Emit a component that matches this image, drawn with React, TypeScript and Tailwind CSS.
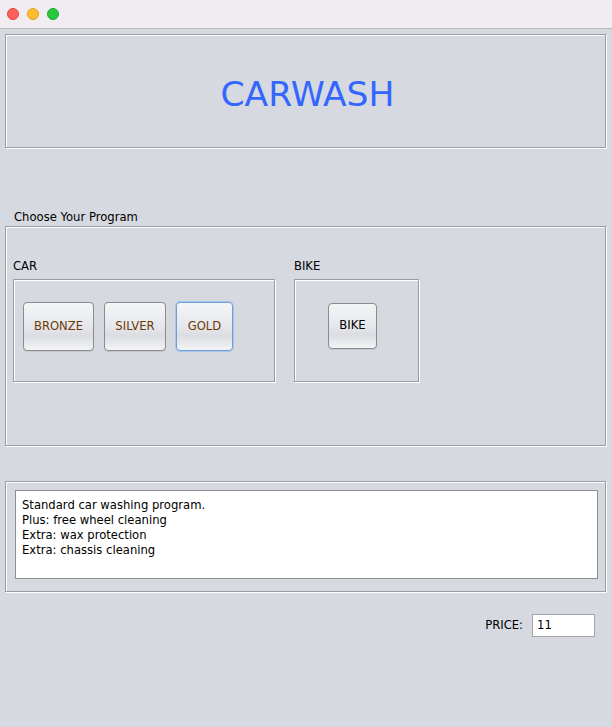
const etched = 'border border-[#9d9d9f] shadow-[inset_1px_1px_0_#ffffff,1px_1px_0_#ffffff]';

const carPrograms = [
  { name: 'BRONZE', w: 'w-[71px]' },
  { name: 'SILVER', w: 'w-[62px]' },
  { name: 'GOLD', w: 'w-[57px]', focused: true },
];

const description = [
  'Standard car washing program.',
  'Plus: free wheel cleaning',
  'Extra: wax protection',
  'Extra: chassis cleaning',
];

const AquaButton = ({
  label,
  className,
  focused,
  dark,
}: {
  label: string;
  className: string;
  focused?: boolean;
  dark?: boolean;
}) => (
  <button
    className={`${className} rounded-[4px] border text-[11.6px] bg-[linear-gradient(#f4f5f7,#e6e7eb_50%,#dcdde2_70%,#f3f4f6)] ${
      focused
        ? 'border-[#6f9fd6] shadow-[0_0_0_1px_#a9c6ea]'
        : 'border-[#8b8b8e] shadow-[0_1px_0_#c6c7cc]'
    } ${dark ? 'text-black' : 'text-[#6b3a06]'}`}
  >
    {label}
  </button>
);

export default function App() {
  return (
    <div className="w-[612px] h-[727px] bg-[#d6d9e0] overflow-hidden font-['DejaVu_Sans',sans-serif] text-[11.6px] text-black">
      {/* title bar */}
      <div className="h-[29px] bg-[#f1ecf1] border-b border-[#b9b9bc] flex items-center gap-[8px] pl-[7px]">
        <span className="w-[12px] h-[12px] rounded-full bg-[#fe5f57] border border-[#e1463f]" />
        <span className="w-[12px] h-[12px] rounded-full bg-[#febc2e] border border-[#dea123]" />
        <span className="w-[12px] h-[12px] rounded-full bg-[#28c840] border border-[#1aab29]" />
      </div>

      {/* header */}
      <div className={`${etched} ml-[5px] mt-[5px] w-[601px] h-[114px] flex items-center justify-center pt-[6px] pl-[4px]`}>
        <span className="text-[#3366ff] text-[34.5px] leading-none">CARWASH</span>
      </div>

      {/* program chooser */}
      <p className="ml-[14px] mt-[61px] h-[16px] leading-[16px]">Choose Your Program</p>
      <div className={`${etched} ml-[5px] mt-[1px] w-[601px] h-[220px] pt-[32px] pl-[7px] flex gap-[19px]`}>
        <div>
          <p className="h-[15px] leading-[15px]">CAR</p>
          <div className={`${etched} mt-[5px] w-[262px] h-[103px] pl-[9px] pt-[22px] flex gap-[10px]`}>
            {carPrograms.map((p) => (
              <AquaButton key={p.name} label={p.name} className={`${p.w} h-[49px]`} focused={p.focused} />
            ))}
          </div>
        </div>
        <div>
          <p className="h-[15px] leading-[15px]">BIKE</p>
          <div className={`${etched} mt-[5px] w-[125px] h-[103px] pt-[23px] pl-[33px]`}>
            <AquaButton label="BIKE" className="w-[49px] h-[46px]" dark />
          </div>
        </div>
      </div>

      {/* description */}
      <div className={`${etched} ml-[5px] mt-[35px] w-[601px] h-[111px] pt-[8px] pl-[9px]`}>
        <div className="w-[583px] h-[89px] bg-white border border-[#8e8f93] pl-[6px] pt-[7px] leading-[15px]">
          {description.map((line) => (
            <p key={line}>{line}</p>
          ))}
        </div>
      </div>

      {/* price */}
      <div className="mt-[22px] flex justify-end items-center gap-[9px] pr-[17px]">
        <span>PRICE:</span>
        <div className="w-[63px] h-[23px] bg-white border border-[#a4a5a9] pl-[4px] leading-[21px]">11</div>
      </div>
    </div>
  );
}
